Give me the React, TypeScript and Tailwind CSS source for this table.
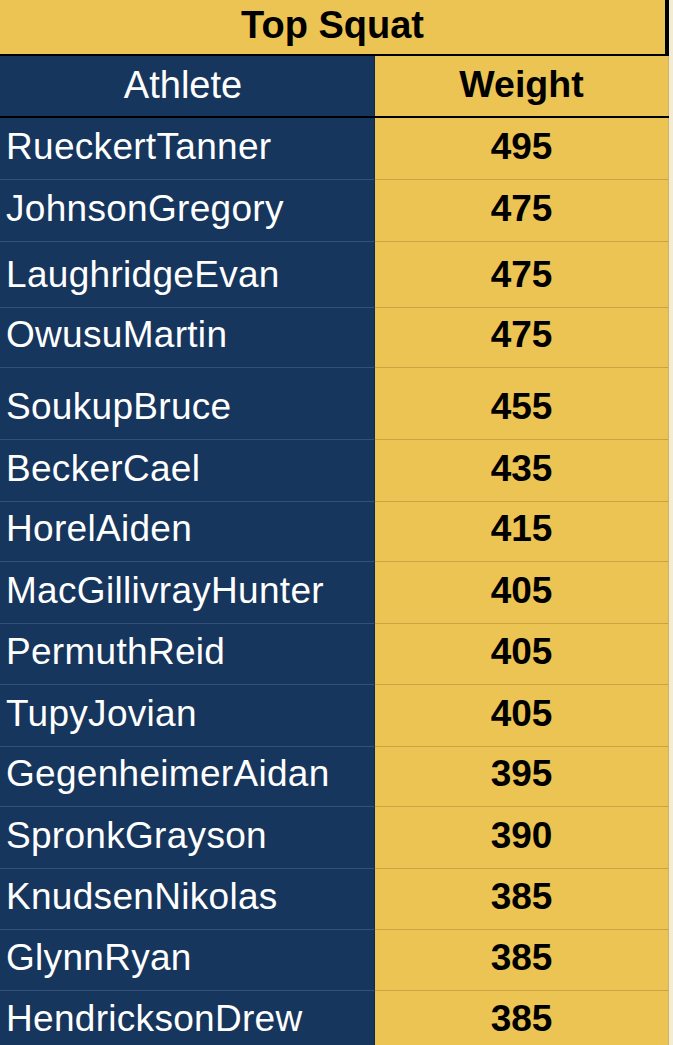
const rows = [
  { name: "RueckertTanner", weight: 495, h: "h-[62px]" },
  { name: "JohnsonGregory", weight: 475, h: "h-[62px]" },
  { name: "LaughridgeEvan", weight: 475, h: "h-[66px]" },
  { name: "OwusuMartin", weight: 475, h: "h-[60px]" },
  { name: "SoukupBruce", weight: 455, h: "h-[72px]" },
  { name: "BeckerCael", weight: 435, h: "h-[62px]" },
  { name: "HorelAiden", weight: 415, h: "h-[60px]" },
  { name: "MacGillivrayHunter", weight: 405, h: "h-[62px]" },
  { name: "PermuthReid", weight: 405, h: "h-[61px]" },
  { name: "TupyJovian", weight: 405, h: "h-[62px]" },
  { name: "GegenheimerAidan", weight: 395, h: "h-[60px]" },
  { name: "SpronkGrayson", weight: 390, h: "h-[62px]" },
  { name: "KnudsenNikolas", weight: 385, h: "h-[61px]" },
  { name: "GlynnRyan", weight: 385, h: "h-[61px]" },
  { name: "HendricksonDrew", weight: 385, h: "h-[61px]" },
];

export default function App() {
  return (
    <div className="min-h-[1045px] w-[673px] overflow-hidden bg-[#f4ecd2] font-['Liberation_Sans',Arial,sans-serif]">
      <div className="w-[669px]">
        {/* Title */}
        <div className="flex h-[56px] items-center justify-center border-b-2 border-r-4 border-black bg-[#ebc453] pb-[4px]">
          <span className="text-[38px] font-bold leading-none text-black">Top Squat</span>
        </div>

        {/* Column headers */}
        <div className="grid h-[62px] grid-cols-[375px_1fr] border-b-2 border-black">
          <div className="flex items-center justify-center border-r border-[#10284a] bg-[#17365d] pb-[2px] pr-[8px]">
            <span className="text-[38px] leading-none text-white">Athlete</span>
          </div>
          <div className="flex items-center justify-center border-r border-[#cbb26a] bg-[#ebc453] pb-[2px]">
            <span className="text-[37.5px] font-bold leading-none text-black">Weight</span>
          </div>
        </div>

        {/* Rows */}
        {rows.map((r) => (
          <div key={r.name} className={`grid grid-cols-[375px_1fr] ${r.h}`}>
            <div className="flex items-end border-b border-r border-b-[#33507a] border-r-[#10284a] bg-[#17365d] pb-[14px] pl-[6px]">
              <span className="text-[37px] leading-none tracking-[0.3px] text-white">{r.name}</span>
            </div>
            <div className="flex items-end justify-center border-b border-r border-b-[#c9a443] border-r-[#cbb26a] bg-[#ebc453] pb-[14px]">
              <span className="text-[37px] font-bold leading-none text-black">{r.weight}</span>
            </div>
          </div>
        ))}
      </div>
    </div>
  );
}
